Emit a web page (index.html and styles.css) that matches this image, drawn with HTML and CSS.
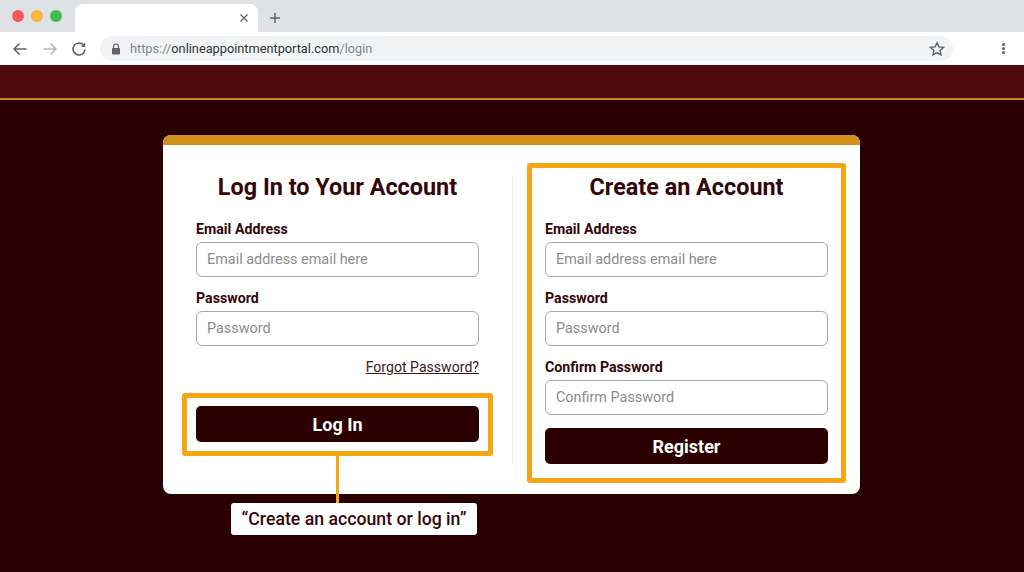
FILE: index.html
```html
<!DOCTYPE html>
<html lang="en">

<head>
    <meta charset="UTF-8">
    <title>Login</title>
    <link rel="stylesheet" href="styles.css">
</head>

<body>
    <!-- browser window -->
    <div class="tab-strip">
        <div class="traffic-lights">
            <span class="light light-red"></span>
            <span class="light light-yellow"></span>
            <span class="light light-green"></span>
        </div>
        <div class="tab">
            <svg class="tab-close" width="10" height="10" viewBox="0 0 10 10" fill="none" stroke="#5f6368" stroke-width="1.3">
                <path d="M1.5 1.5l7 7M8.5 1.5l-7 7" />
            </svg>
        </div>
        <svg class="tab-new" width="12" height="12" viewBox="0 0 12 12" fill="none" stroke="#5f6368" stroke-width="1.5">
            <path d="M6 1v10M1 6h10" />
        </svg>
    </div>

    <div class="toolbar">
        <svg class="nav-icon" width="16" height="16" viewBox="0 0 16 16" fill="none" stroke="#5f6368" stroke-width="1.5">
            <path d="M14.5 8H2M7.5 2.5L2 8l5.5 5.5" />
        </svg>
        <svg class="nav-icon" width="16" height="16" viewBox="0 0 16 16" fill="none" stroke="#b4b7bb" stroke-width="1.5">
            <path d="M1.5 8H14M8.5 2.5L14 8l-5.5 5.5" />
        </svg>
        <svg class="nav-icon" width="16" height="16" viewBox="0 0 16 16" fill="none" stroke="#5f6368" stroke-width="1.6">
            <path d="M13 4.6A6 6 0 1 0 14 8.5" />
            <path d="M14.2 1.5V6H9.7z" fill="#5f6368" stroke="none" />
        </svg>
        <div class="address-bar">
            <svg class="lock" width="10" height="12" viewBox="0 0 10 12">
                <path d="M2.5 5V3.5a2.5 2.5 0 0 1 5 0V5" fill="none" stroke="#5f6368" stroke-width="1.2" />
                <rect x="1" y="5" width="8" height="6.5" rx="1" fill="#5f6368" />
            </svg>
            <span class="url"><span class="url-dim">https://</span>onlineappointmentportal.com<span class="url-dim">/login</span></span>
            <svg class="star" width="16" height="16" viewBox="0 0 16 16" fill="none" stroke="#5f6368" stroke-width="1.4">
                <path d="M8 1.8l1.9 4.1 4.5.5-3.3 3 .9 4.4L8 11.6l-4 2.2.9-4.4-3.3-3 4.5-.5z" />
            </svg>
        </div>
        <div class="menu-dots">
            <span></span><span></span><span></span>
        </div>
    </div>

    <!-- site -->
    <div class="site-header"></div>

    <main class="site-body">
        <div class="card">
            <div class="card-bar"></div>
            <div class="card-content">
                <section class="login-col">
                    <h2 class="col-title">Log In to Your Account</h2>
                    <div class="field">
                        <label>Email Address</label>
                        <input type="text" placeholder="Email address email here">
                    </div>
                    <div class="field">
                        <label>Password</label>
                        <input type="text" placeholder="Password">
                    </div>
                    <div class="forgot"><a href="#">Forgot Password?</a></div>
                    <div class="login-highlight">
                        <button class="submit-btn" type="button">Log In</button>
                        <div class="callout-line"></div>
                        <div class="callout">“Create an account or log in”</div>
                    </div>
                </section>

                <div class="divider"></div>

                <section class="register-col">
                    <h2 class="col-title">Create an Account</h2>
                    <div class="field">
                        <label>Email Address</label>
                        <input type="text" placeholder="Email address email here">
                    </div>
                    <div class="field">
                        <label>Password</label>
                        <input type="text" placeholder="Password">
                    </div>
                    <div class="field">
                        <label>Confirm Password</label>
                        <input type="text" placeholder="Confirm Password">
                    </div>
                    <button class="submit-btn register-btn" type="button">Register</button>
                </section>
            </div>
        </div>
    </main>
</body>

</html>
```

FILE: styles.css
```css
/* base */
* {
    box-sizing: border-box;
}

body {
    margin: 0;
    height: 572px;
    overflow: hidden;
    display: flex;
    flex-direction: column;
    background-color: #2b0000;
    font-family: Roboto, "Liberation Sans", sans-serif;
    color: #33060a;
}

/* browser tabs */
.tab-strip {
    height: 32px;
    flex-shrink: 0;
    display: flex;
    align-items: flex-end;
    background-color: #dfe1e5;
}

.traffic-lights {
    width: 75px;
    height: 32px;
    padding-left: 12px;
    display: flex;
    align-items: center;
    gap: 7px;
}

.light {
    width: 12px;
    height: 12px;
    border-radius: 50%;
}

.light-red {
    background-color: #f9585a;
}

.light-yellow {
    background-color: #fbb43c;
}

.light-green {
    background-color: #3fc04e;
}

.tab {
    width: 183px;
    height: 28px;
    display: flex;
    align-items: center;
    justify-content: flex-end;
    padding-right: 9px;
    background-color: #fff;
    border-radius: 8px 8px 0 0;
}

.tab-new {
    margin: 0 0 8px 11px;
}

/* browser toolbar */
.toolbar {
    height: 33px;
    flex-shrink: 0;
    display: flex;
    align-items: center;
    padding-left: 12px;
    background-color: #fff;
}

.nav-icon {
    margin-right: 13px;
}

.nav-icon:first-child {
    margin-right: 14px;
}

.address-bar {
    width: 853px;
    height: 25px;
    display: flex;
    align-items: center;
    padding: 0 8px 0 11px;
    border-radius: 13px;
    background-color: #f1f3f4;
}

.lock {
    margin-right: 9px;
}

.url {
    flex: 1;
    font-size: 12.75px;
    color: #303336;
}

.url-dim {
    color: #80868b;
}

.menu-dots {
    margin-left: 49px;
    display: flex;
    flex-direction: column;
    gap: 1px;
}

.menu-dots span {
    width: 3px;
    height: 3px;
    border-radius: 50%;
    background-color: #5f6368;
}

/* site header */
.site-header {
    height: 35px;
    flex-shrink: 0;
    background-color: #4e0a0c;
    border-bottom: 2px solid #c77f2a;
}

.site-body {
    flex: 1;
    padding-top: 35px;
}

/* card */
.card {
    width: 697px;
    margin-left: 163px;
    background-color: #fff;
    border-radius: 8px;
}

.card-bar {
    height: 10px;
    background-color: #d18f1b;
    border-radius: 8px 8px 0 0;
}

.card-content {
    display: flex;
    padding: 18px 14px 11px 33px;
}

.login-col {
    width: 283px;
    padding-top: 9px;
}

.divider {
    width: 1px;
    margin: 12px 14px 19px 33px;
    background-color: #e8e8e8;
}

.register-col {
    width: 319px;
    padding: 4px 13px 14px;
    border: 5px solid #f5a615;
    border-radius: 3px;
}

.col-title {
    margin: 0 0 18px;
    font-size: 23.4px;
    line-height: 30px;
    font-weight: 700;
    text-align: center;
}

/* form */
.field {
    margin-bottom: 12px;
}

.field label {
    display: block;
    margin-bottom: 4px;
    font-size: 14.2px;
    line-height: 18px;
    font-weight: 700;
}

.field input {
    display: block;
    width: 100%;
    height: 35px;
    padding: 0 10px;
    border: 1px solid #a9a9a9;
    border-radius: 6px;
    background-color: #fff;
    font-family: inherit;
    font-size: 14.4px;
}

.field input::placeholder {
    color: #8d8d8d;
    opacity: 1;
}

.forgot {
    line-height: 18px;
    font-size: 14.1px;
    text-align: right;
}

.forgot a {
    color: #3a1a1c;
}

.submit-btn {
    display: block;
    width: 100%;
    height: 36px;
    border: none;
    border-radius: 5px;
    background-color: #2b0000;
    color: #fff;
    font-family: inherit;
    font-size: 18px;
    font-weight: 700;
}

.register-btn {
    margin-top: 13px;
}

/* annotations */
.login-highlight {
    position: relative;
    width: 311px;
    margin: 17px 0 0 -14px;
    padding: 8px 9px 9px;
    border: 5px solid #f5a615;
    border-radius: 3px;
}

.callout-line {
    position: absolute;
    top: 100%;
    left: 149px;
    width: 3px;
    height: 47px;
    margin-top: 5px;
    background-color: #f5a615;
}

.callout {
    position: absolute;
    top: 105px;
    left: 44px;
    width: 246px;
    height: 32px;
    border-radius: 3px;
    background-color: #fff;
    font-size: 17.7px;
    font-weight: 500;
    line-height: 32px;
    text-align: center;
    white-space: nowrap;
}
```
